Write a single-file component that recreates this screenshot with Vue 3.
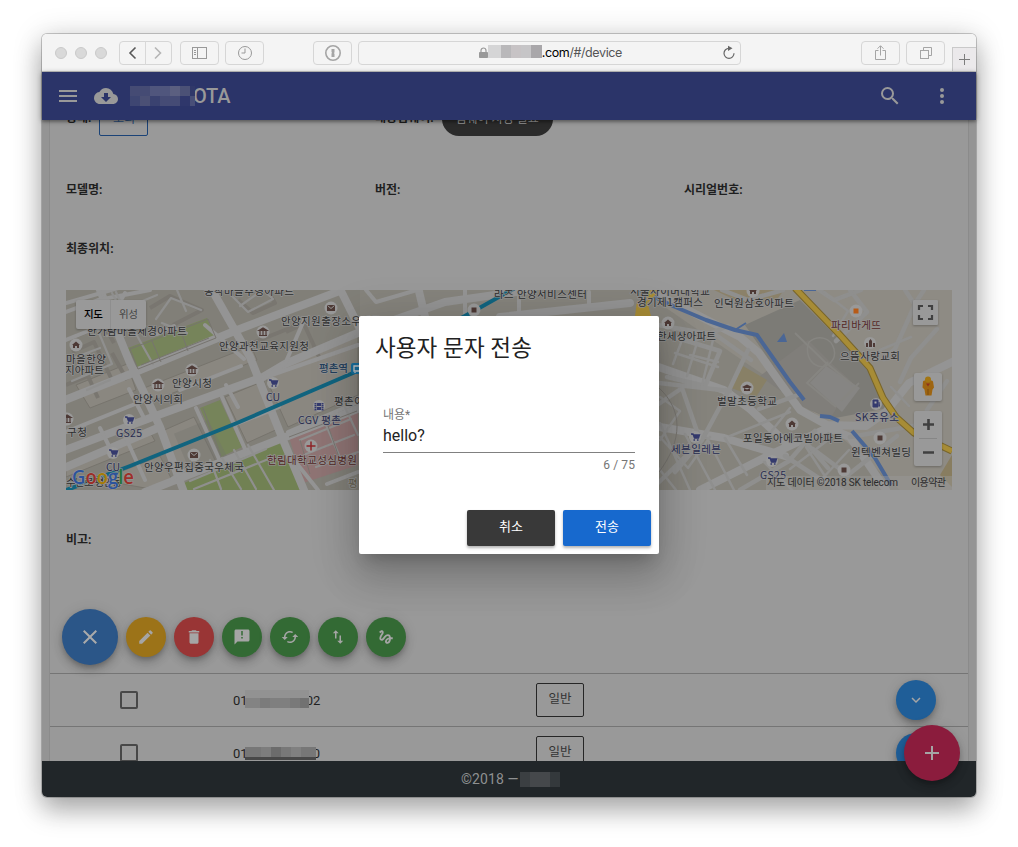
<script setup>
const icons = {
  close: 'M19 6.41 17.59 5 12 10.59 6.41 5 5 6.41 10.59 12 5 17.59 6.41 19 12 13.41 17.59 19 19 17.59 13.41 12z',
  edit: 'M3 17.25V21h3.75L17.81 9.94l-3.75-3.75zM20.71 7.04a1 1 0 0 0 0-1.41l-2.34-2.34a1 1 0 0 0-1.41 0l-1.83 1.83 3.75 3.75z',
  trash: 'M6 19c0 1.1.9 2 2 2h8c1.1 0 2-.9 2-2V7H6zM19 4h-3.5l-1-1h-5l-1 1H5v2h14z',
  sms: 'M20 2H4c-1.1 0-1.99.9-1.99 2L2 22l4-4h14c1.1 0 2-.9 2-2V4c0-1.1-.9-2-2-2zm-7 12h-2v-2h2zm0-4h-2V4h2z',
  sync: 'M19 8l-4 4h3c0 3.31-2.69 6-6 6-1.01 0-1.97-.25-2.8-.7l-1.46 1.46A7.93 7.93 0 0 0 12 20c4.42 0 8-3.58 8-8h3zM6 12c0-3.31 2.69-6 6-6 1.01 0 1.97.25 2.8.7l1.46-1.46A7.93 7.93 0 0 0 12 4c-4.42 0-8 3.58-8 8H1l4 4 4-4z',
  swap: 'M16 17.01V10h-2v7.01h-3L15 21l4-3.99zM9 3 5 6.99h3V14h2V6.99h3z',
  gesture: 'M4.59 6.89c.7-.71 1.4-1.35 1.71-1.22.5.2 0 1.03-.3 1.52-.25.42-2.86 3.89-2.86 6.31 0 1.28.48 2.34 1.34 2.98.75.56 1.74.73 2.64.46 1.07-.31 1.95-1.4 3.06-2.77 1.21-1.49 2.83-3.44 4.08-3.44 1.63 0 1.65 1.01 1.76 1.79-3.78.64-5.38 3.67-5.38 5.37s1.44 3.09 3.21 3.09c1.63 0 4.29-1.33 4.69-6.1H21v-2.5h-2.47c-.15-1.65-1.09-4.2-4.03-4.2-2.25 0-4.18 1.91-4.94 2.84-.58.73-2.06 2.48-2.29 2.72-.25.3-.68.84-1.11.84-.45 0-.72-.83-.36-1.92.35-1.09 1.4-2.86 1.85-3.52.78-1.14 1.3-1.92 1.3-3.28C8.95 3.69 7.31 3 6.44 3 5.12 3 3.97 4 3.72 4.25c-.36.36-.66.66-.88.93zm9.29 11.66c-.31 0-.74-.26-.74-.72 0-.6.73-2.2 2.87-2.76-.3 2.69-1.43 3.48-2.13 3.48z',
}
const actions = [
  { icon: 'edit', tone: 'amber' },
  { icon: 'trash', tone: 'red' },
  { icon: 'sms', tone: 'green' },
  { icon: 'sync', tone: 'green' },
  { icon: 'swap', tone: 'green' },
  { icon: 'gesture', tone: 'green' },
]
const rows = [
  { tail: '02', w: 64, cls: 'a' },
  { tail: '0', w: 71, cls: 'b' },
]

const labels = [
  ['동작마을주영아파트', 204, 295, 90], ['안양지원출장소우체국', 281, 325, 100],
  ['한가람마을세경아파트', 87, 335, 100], ['안양과천교육지원청', 219, 350, 90],
  ['마을한양', 66, 363, 40], ['지아파트', 65, 374, 39],
  ['안양시청', 172, 387, 40], ['안양시의회', 133, 403, 50],
  ['구청', 67, 436, 20], ['안양우편집중국우체국', 144, 471, 100],
  ['평촌아트홀', 334, 405, 50],
  ['라즈 안양서비스센터', 494, 298, 93],
  ['서울사이버대학교', 630, 295, 80], ['경기제1캠퍼스', 637, 306, 66],
  ['인덕원삼호아파트', 714, 307, 80], ['한세상아파트', 657, 340, 59],
  ['으뜸사랑교회', 840, 360, 60], ['벌말초등학교', 717, 405, 60],
  ['포일동아에코빌아파트', 743, 442, 100], ['윈텍벤쳐빌딩', 851, 456, 60],
]
const blueLabels = [
  ['CU', 266, 401, 14], ['GS25', 116, 437, 26], ['CU', 106, 471, 14],
  ['CGV 평촌', 298, 424, 43], ['세븐일레븐', 671, 453, 50],
  ['SK주유소', 855, 421, 44], ['GS25', 760, 479, 26],
]
const brownLabels = [
  ['한림대학교성심병원', 267, 464, 90], ['파리바게뜨', 831, 329, 50],
]
const carts = [[273, 383], [129, 420], [113, 453], [695, 437], [772, 461]]
const banks = [[263, 332], [192, 370], [158, 385], [67, 419]]
const mails = [[331, 308], [194, 455]]
const homes = [[76, 345], [668, 323], [792, 424], [753, 291]]
const squares = [[474, 310], [880, 438], [844, 470]]
</script>

<template>
  <div class="stage">
    <div class="window">
      <div class="chrome">
        <div class="lights"><i></i><i></i><i></i></div>
        <div class="tool nav">
          <svg width="52" height="24" viewBox="0 0 52 24" fill="none" stroke-width="1.6">
            <path d="M16.5 6.500 11 12l5.500 5.500" stroke="#585858" />
            <path d="M36 6.500 41.500 12 36 17.500" stroke="#b5b5b5" />
            <path d="M26.500 0v24" stroke="#d8d8d8" stroke-width="1" />
          </svg>
        </div>
        <div class="tool side">
          <svg width="17" height="14" viewBox="0 0 17 14" fill="none" stroke="#999"><rect x="1.500" y="1.500" width="14" height="11" /><path d="M6.500 1.500v11M3 4.500h2M3 6.500h2M3 8.500h2" /></svg>
        </div>
        <div class="tool clock">
          <svg width="17" height="16" viewBox="0 0 17 16" fill="none" stroke="#999"><circle cx="9" cy="8" r="6.500" /><path d="M9 3.500V8H5.500" /></svg>
        </div>
        <div class="tool key">
          <svg width="19" height="18" viewBox="0 0 19 18" fill="none"><circle cx="10" cy="9" r="7.200" stroke="#a5a5a5" stroke-width="1.600" /><path d="M8.500 5h3v3.500l-.7.600.7.700V13h-3V9.500l.7-.7-.7-.6z" fill="#a5a5a5" /></svg>
        </div>
        <div class="address">
          <svg class="lock" width="9" height="12" viewBox="0 0 9 12"><path d="M2 6V3.500a2.500 2.500 0 0 1 5 0V6" fill="none" stroke="#999" stroke-width="1.200" /><rect x="0" y="5" width="9" height="6" rx=".8" fill="#999" /></svg>
          <span class="mosaic url"></span><span class="host">.com</span><span class="path">/#/device</span>
          <svg class="reload" width="14" height="16" viewBox="0 0 14 16"><path d="M7 3.300A5 5 0 1 0 12 8.300" fill="none" stroke="#666" stroke-width="1.200" /><path d="M6 .8 10.500 3.300 6 6z" fill="#666" /></svg>
        </div>
        <div class="tool share">
          <svg width="14" height="18" viewBox="0 0 14 18" fill="none" stroke="#a5a5a5"><path d="M4.500 6.500H1.500v9h10v-9h-3M6.500 11.500V2M3.500 4.700l3-3 3 3" /></svg>
        </div>
        <div class="tool tabs">
          <svg width="14" height="14" viewBox="0 0 14 14" fill="none" stroke="#a5a5a5"><rect x="1.500" y="4.500" width="8" height="8" /><path d="M4.500 4.500v-3h8v8h-3" /></svg>
        </div>
        <div class="newtab">
          <svg width="11" height="11" viewBox="0 0 11 11"><path d="M5.500 0v11M0 5.500h11" stroke="#7d7d7d" /></svg>
        </div>
      </div>

      <header class="appbar">
        <svg class="menu" width="24" height="24" viewBox="0 0 24 24"><path d="M3 18h18v-2H3zm0-5h18v-2H3zm0-7v2h18V6z" /></svg>
        <svg class="cloud" width="24" height="24" viewBox="0 0 24 24"><path d="M19.350 10.040A7.490 7.490 0 0 0 12 4C9.110 4 6.600 5.640 5.350 8.040A5.994 5.994 0 0 0 0 14c0 3.310 2.690 6 6 6h13c2.760 0 5-2.240 5-5 0-2.640-2.050-4.780-4.650-4.960zM17 13l-5 5-5-5h3V9h4v4z" /></svg>
        <span class="mosaic brand"></span><span class="title">OTA</span>
        <svg class="search" width="24" height="24" viewBox="0 0 24 24"><path d="M15.500 14h-.79l-.28-.27A6.471 6.471 0 0 0 16 9.500 6.500 6.500 0 1 0 9.500 16c1.610 0 3.090-.59 4.230-1.570l.27.28v.79l5 4.990L20.490 19zm-6 0a4.500 4.500 0 1 1 0-9 4.500 4.500 0 0 1 0 9z" /></svg>
        <svg class="more" width="24" height="24" viewBox="0 0 24 24"><circle cx="12" cy="6" r="2" /><circle cx="12" cy="12" r="2" /><circle cx="12" cy="18" r="2" /></svg>
      </header>

      <main class="page">
        <section class="card">
          <div class="fields first">
            <div class="field"><span>상태:</span><span class="chip outline"><b>소리</b></span></div>
            <div class="field"><span>대상펌웨어:</span><span class="chip dark"><b>펌웨어 지정 필요</b></span></div>
          </div>
          <div class="fields second">
            <div class="field">모델명:</div><div class="field">버전:</div><div class="field">시리얼번호:</div>
          </div>
          <div class="fields third"><div class="field">최종위치:</div></div>

          <svg class="map" width="886" height="200" viewBox="66 290 886 200">
            <rect x="66" y="290" width="886" height="200" fill="#85837c" />
            <path d="M66 290H360V490H66z" fill="#817f78" />
            <path d="M640 290H952V490H900L800 400z" fill="#8e8b84" />
            <path d="M745 325 800 300 835 335 870 368 888 408 830 419 800 405z" fill="#7c7b76" />
            <path d="M760 376 808 340 830 362 852 382 830 419 800 405z" fill="#807e7a" />
            <path d="M810 383 826 366 860 388 842 412z" fill="#868583" />
            <path d="M128 348 207 318 215 338 138 368z" fill="#76845a" />
            <path d="M200 408 220 400 242 447 221 457z" fill="#76845a" />
            <path d="M182 484 281 440 303 490H182z" fill="#718153" />
            <path d="M289 437 333 420 358 410V465L303 483z" fill="#8f7474" />
            <path d="M743 366 767 380 756 397 731 388z" fill="#888066" />
            <path d="M714 290h70l-6 8-30 8z" fill="#8b8169" />
            <path d="M952 455l-12 20 12 12z" fill="#887d60" />
            <g fill="#8a8780" stroke="#77746d" stroke-width="1">
              <path d="M160 432 194 417 216 462 178 477zM225 397 264 381 280 428 247 443zM139 390 251 346 257 360 150 402zM76 385 127 364 136 390 90 408zM66 466 150 432 155 441 66 477zM100 480 160 456 172 480 145 488zM264 374 358 333V395L288 427z" />
            </g>
            <path d="M160 432 194 417 216 462 178 477z" fill="#74726c" transform="translate(14 32) scale(1 .93)" opacity=".35" />
            <g fill="none" stroke="#797670" stroke-linejoin="round" stroke-width="4">
              <path d="M72 352l22-10 18 38M76 336l28-11 10 18M150 308l20-12 32 14-29 15M238 300l15 13 22-10-8-13M66 385l22-9 10 22M112 353l15 27M286 332l18-8 16 35M245 346l60-24" />
            </g>
            <g fill="none" stroke="#949494" stroke-linecap="round" stroke-linejoin="round">
              <path stroke-width="8" d="M60 402 133 373 237 330 337 292M60 452 150 418 263 377 285 364 360 332 445 302 530 290M145 492 283 438 360 408M98 285 130 363 160 427 185 495M212 290 250 357 283 440 306 495M339 287 364 337M418 287l8 34M500 317l130-14M64 468 160 427" />
              <path stroke-width="4" d="M196 408 219 459M222 397 245 449M226 385 238 407M129 389 145 420M125 436 145 480M264 377 285 364 304 320M263 378 358 345M66 432 145 400M66 312 98 300 150 290M288 432 358 402M180 390l61-24M234 425l45-18M157 334l17-8M100 428l9 18M66 340l42-17 17-30M205 325l39 34M66 303l63-18M172 479l11-8M290 455l28 35M327 484l31-12M366 290l10 12 41-12M465 290v24M519 297v20M589 292v17" />
              <path stroke-width="8" d="M655 293 740 337 759 353 781 384 800 410 827 425 866 426 886 412 909 383 952 362M650 364 724 390 750 409 784 441M700 490 774 453 828 428 850 437 886 490M648 425 724 438 785 456" />
            </g>
            <g fill="none" stroke="#8f8f8e" stroke-linecap="round" stroke-linejoin="round">
              <path stroke-width="2.200" d="M72 381l40-17-18-43M82 375l-6-18 24-9M87 390l23-10M107 336l24-11 22 39M131 325l-15-33M156 319l15-21 30 12M162 323l25 10M177 290l9 21M112 293l9 17 36-15M233 297l15 15 25-13-10-9M240 306l17-12M210 460l11 29M222 458l19 31M234 450l22 39M248 445l26 45M190 481l76-32M194 489l77-31M326 425l16 37M300 440l51-21M306 454l48-19M316 467l42-15M343 403l15 32" />
              <path stroke-width="4.500" d="M748 350 730 388 702 440 675 472M759 409 798 395M650 382l80 9M652 324l64 11 35 25M650 410l32-22 18 52M690 342l38-16M667 377l38 9 15-35-43-13M656 485l35-34M785 456l35 23 22 11M802 438l26 30M815 431l-26 30-49 29M813 449l35 26 49-39M850 437l69-12M722 290l26 10 35-10M819 290l15 10 27-10M836 341l31-29-17-22M900 382l11-24 26-29M884 359l11-10 21-47 8-12M905 290l10 15M927 410l20-29" />
              <path stroke-width="2.500" d="M675 353l43 14M682 340l-9 24M696 346l-9 30M713 340l-11 45M690 355l28 7M660 437l28 31 22-31M660 423l30 67M685 434l30 56M707 438l27 52M648 455l28 35M725 438l22 37M730 436l60-24M766 438l24-30M764 462l28 28M806 447l28 43M828 440l-38 29M849 450l-29 31M660 397l20 14-20 29M824 292l24 19-15 25M834 301l21-8M880 350l31-13M891 387l18 19" />
            </g>
            <g fill="none" stroke="#868581" stroke-width="2"><path d="M795 333l30 29 28 23M828 362l-21 21 29 24M859 383l-18 18" /></g>
            <g fill="none" stroke="#77746f" stroke-width="1">
              <path d="M130 349 208 319 216 338 138 369zM289 437 357 411M300 440 310 474M327 423 341 463M141 365l68-27M152 341l9 21M180 329l8 22M203 408l18 48M659 472c24-32 24-62 0-84" />
            </g>
            <path d="M809 342c10-8 22-4 25 7s-7 20-16 17-13-14-9-24" fill="none" stroke="#868581" stroke-width="1.500" />
            <g fill="none" stroke="#4a6695" stroke-width="4" stroke-linejoin="round">
              <path d="M640 290 673 306 706 320 735 330 757 335 778 365 790 382 804 400" />
              <path d="M820 416 830 417 839 421M852 431 865 446 875 458 891 485" />
              <path d="M735 330 746 323M804 290h12" stroke-width="2" />
            </g>
            <path d="M777 342 784 333 787 342z" fill="#4a6695" />
            <path d="M795 288 840 335 870 368 883 398 896 417 914 433 952 451" fill="none" stroke="#78652b" stroke-width="7" />
            <path d="M795 288 840 335 870 368 883 398 896 417 914 433 952 451" fill="none" stroke="#a78c36" stroke-width="5" />
            <path d="M637 301h10l4 15h-16zM645 290h15l-12 13z" fill="#a78c36" />
            <path d="M64 491 130 466 237 423 353 373 430 335 474 311 515 288" fill="none" stroke="#11647f" stroke-width="4" />
            <rect x="351" y="363" width="12" height="11" rx="2" fill="#1872a2" />
            <path d="M354 366h7v5h-7zm1 6v1m5-1v1" fill="none" stroke="#ccc" stroke-width="1.300" />

            <g class="pins">
              <g v-for="(p, i) in carts" :key="'c' + i" :transform="`translate(${p[0]} ${p[1]})`"><circle r="6" /><path d="M-4-3h2l1.500 4H3.500l1-3H-1.500" stroke="#343a6e" stroke-width="1.300" fill="#343a6e" /><path d="M-1.500 3h1.500M2 3h1.500" stroke="#343a6e" stroke-width="1.500" /></g>
              <g v-for="(p, i) in banks" :key="'b' + i" :transform="`translate(${p[0]} ${p[1]})`"><circle r="6.500" /><path d="M-4-1.500 0-4l4 2.500zM-3-1v4M0-1v4M3-1v4M-4 3.500h8" stroke="#4d3935" fill="#4d3935" stroke-width="1.200" /></g>
              <g v-for="(p, i) in mails" :key="'m' + i" :transform="`translate(${p[0]} ${p[1]})`"><circle r="6.500" /><path d="M-4-3h8v6h-8z" fill="#4d3935" /><path d="M-3.500-2.500 0 .5l3.500-3" fill="none" stroke="#999" /></g>
              <g v-for="(p, i) in homes" :key="'h' + i" :transform="`translate(${p[0]} ${p[1]})`"><circle r="6.500" /><path d="M-4 0 0-3.500 4 0H3v3H1V1h-2v2h-2V0z" fill="#4d3935" /></g>
              <g v-for="(p, i) in squares" :key="'s' + i" :transform="`translate(${p[0]} ${p[1]})`"><circle r="6.500" /><path d="M-2.500-2.500h5v5h-5z" fill="#4d3935" /></g>
              <circle cx="856" cy="311" r="6.500" /><path d="M853.500 308.500h5v5h-5z" fill="#b75b17" />
              <circle cx="311" cy="446" r="6.500" /><path d="M311 441.500v9M306.500 446h9" stroke="#8e2528" stroke-width="1.500" />
              <circle cx="319" cy="406" r="6" /><path d="M315.500 403v7.500M322.500 403v7.500" stroke="#343a6e" stroke-width="2" stroke-dasharray="1.500 .5" /><path d="M317 403h4v7h-4z" fill="#343a6e" /><path d="M317 406.500h4" stroke="#999" />
              <circle cx="747" cy="388" r="6.500" /><path d="M742 387l5-2.500 5 2.500-5 2.500zM744 388v3h6v-3" fill="#4d3935" />
              <circle cx="870" cy="343" r="6" /><path d="M866 347v-4h2v4zM869 347v-6l1.500-2 1.500 2v6zM873 347v-4h2v4z" fill="#4d3935" />
              <circle cx="876" cy="404" r="6" /><path d="M873 400h5v7h-5zM879 402v4h1" fill="#343a6e" stroke="#343a6e" /><path d="M874.500 401.500h2v2h-2z" fill="#aaa" />
            </g>
            <g class="labels">
              <text v-for="l in labels" :key="l[0]" :x="l[1]" :y="l[2]" :textLength="l[3]">{{ l[0] }}</text>
              <g class="navy"><text v-for="(l, i) in blueLabels" :key="i" :x="l[1]" :y="l[2]" :textLength="l[3]">{{ l[0] }}</text>
                <text x="319" y="372" textLength="29" class="station">평촌역</text></g>
              <g class="brown"><text v-for="l in brownLabels" :key="l[0]" :x="l[1]" :y="l[2]" :textLength="l[3]">{{ l[0] }}</text></g>
              <text x="348" y="487" class="faded">평</text>
              <text x="66" y="486" textLength="56">수난로 평안동</text>
            </g>
            <text class="google" x="72" y="484" textLength="62" lengthAdjust="spacingAndGlyphs"><tspan fill="#2c539c">G</tspan><tspan fill="#9d2f28">o</tspan><tspan fill="#a67c08">o</tspan><tspan fill="#2c539c">g</tspan><tspan fill="#25743a">l</tspan><tspan fill="#9d2f28">e</tspan></text>
            <path d="M766 476H952v14H766z" fill="#999" opacity=".45" />
            <g class="legal"><text x="767" y="486" textLength="131">지도 데이터 ©2018 SK telecom</text><text x="911" y="486" textLength="35">이용약관</text></g>
            <g class="controls">
              <rect x="76" y="300" width="70" height="29" rx="2" fill="#999" /><path d="M110.500 300v29" stroke="#8e8e8e" />
              <text x="84" y="318" textLength="19" class="on">지도</text><text x="119" y="318" textLength="19">위성</text>
              <rect x="913" y="300" width="25" height="25" rx="1" fill="#999" />
              <path d="M919 310v-4h4M928 306h4v4M932 315v4h-4M923 319h-4v-4" fill="none" stroke="#404040" stroke-width="2.200" />
              <rect x="914" y="373" width="28" height="28" rx="2" fill="#999" />
              <path d="M923 381.500c1-2 9-2 10 0l1 6-1.500 2-1 6h-6l-1-6-2-2z" fill="#9e6511" /><circle cx="928" cy="379.500" r="3" fill="#a37613" /><path d="M926 383.500h4l-2 3z" fill="#8d2f1b" /><path d="M928 389v6" stroke="#7d4d0e" />
              <rect x="914" y="411" width="28" height="55" rx="2" fill="#999" /><path d="M919 438.500h18" stroke="#868686" />
              <path d="M923 424.500h11M928.500 419v11M923 452.500h11" stroke="#404040" stroke-width="2.600" />
            </g>
          </svg>

          <div class="fields note"><div class="field">비고:</div></div>
          <div class="actions">
            <button class="fab big"><svg width="24" height="24" viewBox="0 0 24 24"><path :d="icons.close" /></svg></button>
            <button v-for="a in actions" :key="a.icon" class="fab" :class="a.tone"><svg width="18" height="18" viewBox="0 0 24 24"><path :d="icons[a.icon]" /></svg></button>
          </div>

          <div v-for="r in rows" :key="r.cls" class="row">
            <span class="check"></span>
            <div class="phone">01<span class="mosaic num" :class="r.cls" :style="{ width: r.w + 'px' }"></span>{{ r.tail }}</div>
            <span class="tag">일반</span>
            <button class="fab blue"><svg width="18" height="18" viewBox="0 0 24 24"><path d="M16.590 8.590 12 13.170 7.410 8.590 6 10l6 6 6-6z" /></svg></button>
          </div>
        </section>
      </main>

      <footer class="foot">©2018 —<span class="mosaic corp"></span></footer>
      <button class="fab add"><svg width="24" height="24" viewBox="0 0 24 24"><path d="M19 13h-6v6h-2v-6H5v-2h6V5h2v6h6z" /></svg></button>

      <div class="dialog">
        <h2>사용자 문자 전송</h2>
        <div class="input">
          <label>내용*</label>
          <div class="value">hello?</div>
          <div class="count">6 / 75</div>
        </div>
        <div class="buttons"><button class="cancel">취소</button><button class="send">전송</button></div>
      </div>
    </div>
  </div>
</template>

<style>
body { margin: 0; background: #fff; overflow: hidden; }
</style>
<style scoped>
* { box-sizing: border-box; }
svg { display: block; flex: none; }
button { border: 0; padding: 0; font: inherit; }
.stage { width: 1018px; height: 847px; padding: 34px 42px 50px; background: #fff; overflow: hidden; font-family: Roboto, "Noto Sans CJK KR", sans-serif; }
.window { position: relative; width: 934px; height: 763px; border-radius: 5px; display: flex; flex-direction: column; box-shadow: 0 0 0 1px rgba(0, 0, 0, .2), 0 14px 26px rgba(0, 0, 0, .27), 0 2px 30px rgba(0, 0, 0, .17); }
.chrome { height: 38px; flex: none; display: flex; align-items: center; background: #f4f4f4; border-bottom: 1px solid #c4c4c4; border-radius: 5px 5px 0 0; padding-left: 13px; overflow: hidden; }
.lights { display: flex; gap: 8px; width: 64px; }
.lights i { width: 12px; height: 12px; border-radius: 50%; background: #d9d9d9; border: 1px solid #cacaca; }
.tool { height: 24px; width: 39px; flex: none; border: 1px solid #d6d6d6; border-radius: 4px; display: flex; align-items: center; justify-content: center; }
.nav { width: 53px; }
.side { margin-left: 8px; }
.clock { margin-left: 6px; }
.key { margin-left: 49px; }
.address { position: relative; margin-left: 6px; width: 383px; height: 24px; border: 1px solid #d6d6d6; border-radius: 4px; display: flex; align-items: center; padding-left: 120px; font: 12.500px/24px Inter, sans-serif; letter-spacing: -.4px; color: #000; }
.address .path { color: #555; }
.reload { margin-left: auto; margin-right: 4px; }
.share { margin-left: 120px; }
.key + .address { width: 384px; }
.tabs { margin-left: 6px; }
.newtab { align-self: flex-end; margin-left: 7px; width: 24px; height: 24px; flex: none; background: #ebe9eb; border: 1px solid #c9c9c9; border-width: 1px 0 0 1px; display: flex; align-items: center; justify-content: center; }
.mosaic { display: inline-block; flex: none; }
.url { width: 54px; height: 13px; margin-top: -3px; background: linear-gradient(90deg, #d5d5d6 0 13px, #b9b8ba 13px 23px, #c7c3c5 23px 33px, #c6c5c7 33px 43px, #a9a7aa 43px); }
.appbar { position: relative; z-index: 2; height: 48px; flex: none; background: #2b3469; display: flex; align-items: center; padding: 0 22px 0 14px; box-shadow: 0 1px 5px rgba(0, 0, 0, .4), 0 2px 2px rgba(0, 0, 0, .15); color: #999; fill: #999; }
.cloud { margin-left: 14px; }
.brand { margin-left: 12px; width: 65px; height: 20px; background: linear-gradient(90deg, #454b74 0 20px, #50567d 20px 40px, #5b5f80 40px 50px, #4b5176 50px 60px, #303869 60px); position: relative; z-index: 1; }
.brand::after { content: ""; position: absolute; inset: 10px 0 0; background: linear-gradient(90deg, #3e4672 0 10px, #4b5075 10px 20px, #3a4270 20px 30px, #454b75 30px 50px, #2f376b 50px 60px, #484f78 60px); }
.title { font-size: 20px; font-weight: 500; letter-spacing: -.2px; margin-left: -2px; }
.search { margin-left: auto; }
.more { margin-left: 28px; }
.page { height: 641px; flex: none; overflow: hidden; background: #949494; padding: 0 7px; }
.card { height: 641px; background: #999; border: 1px solid #8b8b8b; border-width: 0 1px; overflow: hidden; }
.fields { display: grid; grid-template-columns: repeat(3, 309px); padding-left: 16px; }
.field { font-size: 12px; font-weight: 700; color: #1f1f1f; letter-spacing: 0; display: flex; align-items: center; white-space: nowrap; padding-bottom: 2px; }
.first .field { padding-bottom: 0; }
.first .field > span:first-child { margin-top: -5px; }
.first { height: 34px; margin-top: -18px; }
.second { height: 60px; margin-top: 23px; }
.third { height: 58px; }
.chip { height: 34px; font-size: 12px; display: flex; align-items: center; justify-content: center; }
.chip b { font-weight: 400; margin-top: -4px; }
.outline { width: 49px; margin-left: 8px; border: 1px solid #1b4377; border-radius: 2px; color: #2b4e7e; }
.dark { width: 111px; margin-left: 8px; border-radius: 17px; background: #2b2b2b; color: #999; }
.map { margin: 13px 0 0 16px; }
.labels text { font: 10.500px "Noto Sans CJK KR", sans-serif; fill: #2d2d2d; paint-order: stroke; stroke: #929292; stroke-width: 1.600px; stroke-linejoin: round; }
.labels .navy text { fill: #292d50; }
.labels .navy .station { fill: #223e5c; font-weight: 500; }
.labels .brown text { fill: #542725; }
.labels .faded { fill: #66614f; }
.pins circle { fill: #999; }
.google { font: 600 20px "Open Sans", sans-serif; paint-order: stroke; stroke: #999; stroke-width: 1px; }
.legal text { font: 10px Roboto, "Noto Sans CJK KR", sans-serif; fill: #2c2c2c; }
.controls rect { filter: drop-shadow(0 1px 1px rgba(0, 0, 0, .25)); }
.controls text { font: 10.500px "Noto Sans CJK KR", sans-serif; fill: #454545; }
.controls .on { fill: #000; font-weight: 500; }
.note { height: 98px; }
.actions { height: 85px; padding: 13px 0 0 12px; display: flex; gap: 8px; align-items: center; }
.fab { width: 40px; height: 40px; flex: none; border-radius: 50%; display: flex; align-items: center; justify-content: center; fill: #a5a5a5; box-shadow: 0 3px 5px -1px rgba(0, 0, 0, .2), 0 6px 10px rgba(0, 0, 0, .14), 0 1px 14px rgba(0, 0, 0, .1); }
.big { width: 56px; height: 56px; background: #2b5688; fill: #aaa; }
.amber { background: #9c7318; }
.red { background: #993535; }
.green { background: #336a34; }
.blue { background: #1f5e98; }
.row { height: 53px; border-top: 1px solid #757575; display: flex; align-items: center; font-size: 13px; color: #1f1f1f; }
.check { width: 18px; height: 18px; margin-left: 70px; border: 2px solid #484848; border-radius: 2px; flex: none; }
.phone { margin-left: 95px; width: 303px; display: flex; align-items: center; letter-spacing: 0; }
.phone .num { margin: 0 -3px 0 -3px; position: relative; }
.num.a { height: 18px; margin-top: -2px; background: linear-gradient(#929292 0 8px, transparent 8px), linear-gradient(90deg, #838383 0 15px, #7b7b7b 15px 25px, #7f7f7f 25px 45px, #797979 45px 55px, #717171 55px); }
.num.b { height: 13px; background: linear-gradient(transparent 10px, #484848 10px), linear-gradient(90deg, #777 0 16px, #7d7d7d 16px 26px, #6c6c6c 26px 36px, #787878 36px 46px, #808080 46px 56px, #777 56px); }
.tag { width: 48px; height: 34px; border: 1px solid #262626; border-radius: 2px; display: flex; align-items: center; justify-content: center; font-size: 12.500px; line-height: 30px; padding-bottom: 2px; color: #333; }
.row .fab { margin-left: auto; margin-right: 32px; }
.foot { height: 36px; flex: none; position: relative; background: #212629; border-radius: 0 0 5px 5px; color: #8e9091; font-size: 14px; display: flex; align-items: center; padding-left: 419px; letter-spacing: .1px; }
.corp { width: 40px; height: 15px; margin-left: 1px; background: linear-gradient(90deg, #3b3f42 0 10px, #45484b 10px 30px, #34393c 30px); }
.fab.add { position: absolute; left: 862px; top: 691px; width: 56px; height: 56px; background: #8b1c3d; z-index: 3; }
.dialog { position: absolute; z-index: 5; left: 317px; top: 282px; width: 300px; height: 238px; background: #fff; border-radius: 2px; display: flex; flex-direction: column; box-shadow: 0 11px 15px -7px rgba(0, 0, 0, .2), 0 24px 38px 3px rgba(0, 0, 0, .14), 0 9px 46px 8px rgba(0, 0, 0, .12); }
.dialog h2 { margin: 16px 16px 0; height: 32px; font-size: 22.500px; font-weight: 400; line-height: 32px; color: #222; letter-spacing: .1px; white-space: nowrap; }
.input { margin: 41px 24px 0; }
.input label { display: block; height: 19px; line-height: 20px; font-size: 12px; color: #757575; }
.value { height: 29px; border-bottom: 1px solid #808080; font-size: 16px; line-height: 23px; color: #222; }
.count { font-size: 12px; line-height: 24px; text-align: right; color: #757575; letter-spacing: .1px; }
.buttons { display: flex; gap: 8px; justify-content: flex-end; margin: auto 8px 8px; }
.buttons button { width: 88px; height: 36px; border-radius: 2px; color: #fff; font-size: 13px; line-height: 34px; font-weight: 400; box-shadow: 0 2px 3px rgba(0, 0, 0, .3); padding-bottom: 2px; }
.cancel { background: #393939; }
.send { background: #1769ce; }
</style>
